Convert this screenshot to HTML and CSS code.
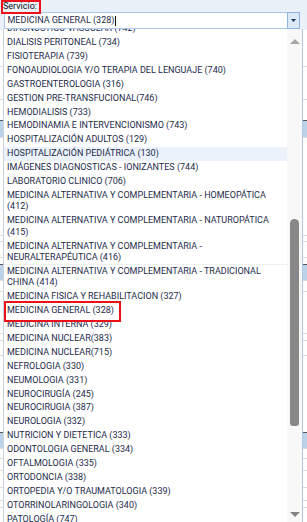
FILE: index.html
```html
<!DOCTYPE html>
<html lang="es">
<head>
<meta charset="utf-8">
<title>Servicio</title>
<link rel="stylesheet" href="styles.css">
</head>
<body>
<div class="page">
  <div class="label-row"><span class="label">Servicio:</span></div>
  <div class="combo">
    <span class="combo-text">MEDICINA GENERAL (328)<span class="caret"></span></span>
    <span class="combo-btn"><svg width="5" height="3" viewBox="0 0 5 3"><path d="M0 0H5L2.5 3Z" fill="#1d3557"/></svg></span>
  </div>
  <div class="dropdown">
    <ul class="list">
      <li class="item first">DIAGNOSTICO VASCULAR (742)</li>
      <li class="item">DIALISIS PERITONEAL (734)</li>
      <li class="item">FISIOTERAPIA (739)</li>
      <li class="item">FONOAUDIOLOGIA Y/O TERAPIA DEL LENGUAJE (740)</li>
      <li class="item">GASTROENTEROLOGIA (316)</li>
      <li class="item">GESTION PRE-TRANSFUCIONAL(746)</li>
      <li class="item">HEMODIALISIS (733)</li>
      <li class="item">HEMODINAMIA E INTERVENCIONISMO (743)</li>
      <li class="item">HOSPITALIZACIÓN ADULTOS (129)</li>
      <li class="item hover">HOSPITALIZACIÓN PEDIÁTRICA (130)</li>
      <li class="item">IMÁGENES DIAGNOSTICAS - IONIZANTES (744)</li>
      <li class="item">LABORATORIO CLINICO (706)</li>
      <li class="item">MEDICINA ALTERNATIVA Y COMPLEMENTARIA - HOMEOPÁTICA<br>(412)</li>
      <li class="item">MEDICINA ALTERNATIVA Y COMPLEMENTARIA - NATUROPÁTICA<br>(415)</li>
      <li class="item sep">MEDICINA ALTERNATIVA Y COMPLEMENTARIA -<br>NEURALTERAPÉUTICA (416)</li>
      <li class="item">MEDICINA ALTERNATIVA Y COMPLEMENTARIA - TRADICIONAL<br>CHINA (414)</li>
      <li class="item">MEDICINA FISICA Y REHABILITACION (327)</li>
      <li class="item">MEDICINA GENERAL (328)</li>
      <li class="item">MEDICINA INTERNA (329)</li>
      <li class="item">MEDICINA NUCLEAR(383)</li>
      <li class="item">MEDICINA NUCLEAR(715)</li>
      <li class="item">NEFROLOGIA (330)</li>
      <li class="item">NEUMOLOGIA (331)</li>
      <li class="item">NEUROCIRUGÍA (245)</li>
      <li class="item">NEUROCIRUGIA (387)</li>
      <li class="item">NEUROLOGIA (332)</li>
      <li class="item">NUTRICION Y DIETETICA (333)</li>
      <li class="item">ODONTOLOGIA GENERAL (334)</li>
      <li class="item">OFTALMOLOGIA (335)</li>
      <li class="item">ORTODONCIA (338)</li>
      <li class="item">ORTOPEDIA Y/O TRAUMATOLOGIA (339)</li>
      <li class="item">OTORRINOLARINGOLOGIA (340)</li>
      <li class="item">PATOLOGÍA (747)</li>
    </ul>
    <div class="scrollbar">
      <span class="arrow up"></span>
      <span class="thumb"></span>
      <span class="arrow down"></span>
    </div>
  </div>
  <div class="mark mark-label"></div>
  <div class="mark mark-item"></div>
</div>
</body>
</html>
```
FILE: styles.css
```css
* { box-sizing: border-box; }
html, body { margin: 0; padding: 0; }
body {
  font-family: Roboto, "Liberation Sans", Arial, sans-serif;
  font-size: 9px;
  color: #1e2b4a;
}
.page {
  position: relative;
  width: 307px;
  height: 522px;
  overflow: hidden;
  background: linear-gradient(to bottom,
    #eaf1f9 0 30px,
    #ffffff 30px 66px, #dcdcdc 66px 67px,
    #ffffff 67px 99px, #dcdcdc 99px 100px,
    #ffffff 100px 120px, #555555 120px 121px, #bcd4ea 121px 137px, #dcdcdc 137px 138px,
    #ffffff 138px 235px, #dcdcdc 235px 236px,
    #ffffff 236px 241px, #dcdcdc 241px 242px,
    #ffffff 242px 257px, #dcdcdc 257px 258px,
    #ffffff 258px 264px, #555555 264px 265px, #bcd4ea 265px 280px, #dcdcdc 280px 281px,
    #ffffff 281px 291px, #dcdcdc 291px 292px,
    #ffffff 292px 333px, #dcdcdc 333px 334px,
    #ffffff 334px 340px, #dcdcdc 340px 341px,
    #ffffff 341px 355px, #dcdcdc 355px 356px,
    #ffffff 356px 432px, #555555 432px 433px, #bcd4ea 433px 448px, #dcdcdc 448px 449px,
    #ffffff 449px 458px, #dcdcdc 458px 459px,
    #ffffff 459px 470px, #dcdcdc 470px 471px,
    #ffffff 471px 487px, #dcdcdc 487px 488px,
    #ffffff 488px 500px, #dcdcdc 500px 501px,
    #ffffff 501px 507px, #dcdcdc 507px 508px,
    #ffffff 508px 522px);
}
.label-row {
  height: 12px;
  padding-left: 3px;
  line-height: 13px;
}
.label { color: #111; }
.combo {
  display: flex;
  margin-left: 4px;
  width: 296px;
  height: 17px;
  border: 1px solid #a9c7ea;
  background: #fff;
}
.combo-text {
  flex: 1;
  display: flex;
  align-items: center;
  padding-left: 2.5px;
  line-height: 15px;
  white-space: nowrap;
}
.caret {
  display: inline-block;
  width: 1px;
  height: 10px;
  margin-left: 1px;
  background: #111;
}
.combo-btn {
  width: 13px;
  margin: -1px -1px -1px 0;
  border: 1px solid #8db6e6;
  background: #dce9f8;
  display: flex;
  align-items: center;
  justify-content: center;
}
.combo-btn svg { display: block; }
.dropdown {
  display: flex;
  margin-left: 3px;
  width: 300px;
  height: 493px;
  border-left: 1px solid #c9d2dd;
  border-right: 1px solid #b3c7e2;
  background: #fff;
}
.list {
  flex: 1;
  margin: 0;
  padding: 0;
  list-style: none;
  overflow: hidden;
}
.item {
  padding: 1.25px 0 1.25px 3px;
  line-height: 11.4px;
  white-space: nowrap;
}
.item.first { margin-top: -7.15px; }
.item.hover { background: #ebf2fb; }
.item.sep { box-shadow: inset 0 -1px 0 #eef0f3; }
.scrollbar {
  width: 15px;
  flex: none;
  background: #f8f8f8;
  display: flex;
  flex-direction: column;
  align-items: center;
  padding: 9.5px 0 5.3px;
}
.arrow {
  width: 0;
  height: 0;
  border-left: 5px solid transparent;
  border-right: 5px solid transparent;
}
.arrow.up { border-bottom: 5px solid #a6a6a6; }
.arrow.down { border-top: 5px solid #858585; margin-top: auto; }
.thumb {
  width: 9px;
  height: 207px;
  margin-top: 175.5px;
  border-radius: 4.5px 4.5px 3px 3px;
  background: #888888;
}
.mark {
  position: absolute;
  border: 2px solid #ec1118;
}
.mark-label { left: 1px; top: 0; width: 40px; height: 14px; }
.mark-item { left: 4px; top: 301px; width: 117px; height: 21px; }
```
